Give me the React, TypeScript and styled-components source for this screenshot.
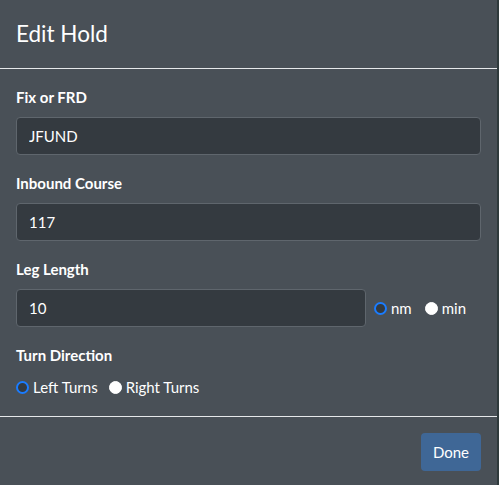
import React, { useState } from 'react';
import styled, { createGlobalStyle } from 'styled-components';

const GlobalStyle = createGlobalStyle`
  html, body {
    margin: 0;
    padding: 0;
    background: #495057;
  }
  body {
    font-family: Lato, "Noto Sans", sans-serif;
    color: #ffffff;
  }
`;

const Modal = styled.div`
  width: 497px;
  height: 485px;
  background: #495057;
  border-right: 2px solid #2f3a3c;
  display: flex;
  flex-direction: column;
`;

const Header = styled.div`
  padding: 16px;
  border-bottom: 1px solid #e6e8ea;
`;

const Title = styled.h1`
  margin: 0;
  font-size: 22.5px;
  font-weight: 400;
  line-height: 36px;
`;

const Body = styled.div`
  padding: 16px 16px 17px;
  border-bottom: 1px solid #e6e8ea;
`;

const Group = styled.div<{ $last?: boolean }>`
  margin-bottom: ${(p) => (p.$last ? '0' : '16px')};
`;

const Label = styled.div`
  font-size: 15px;
  font-weight: 700;
  line-height: 24px;
  margin-bottom: 8px;
`;

const Row = styled.div`
  display: flex;
  align-items: center;
`;

const TextInput = styled.input<{ $width?: number }>`
  box-sizing: border-box;
  width: ${(p) => (p.$width ? `${p.$width}px` : '100%')};
  height: 38px;
  padding: 0 12px;
  background: #343a40;
  border: 1px solid #5f666d;
  border-radius: 4px;
  color: #ffffff;
  font-family: inherit;
  font-size: 15px;
  outline: none;
`;

const RadioLabel = styled.label<{ $gap?: number }>`
  display: inline-flex;
  align-items: center;
  gap: 4px;
  margin-left: ${(p) => p.$gap ?? 0}px;
  font-size: 15px;
  line-height: 24px;
  cursor: pointer;
`;

const RadioDot = styled.span<{ $checked: boolean }>`
  box-sizing: border-box;
  width: 13px;
  height: 13px;
  border-radius: 50%;
  background: ${(p) => (p.$checked ? '#343a40' : '#ffffff')};
  border: ${(p) => (p.$checked ? '2.5px solid #1a7cff' : '1px solid #ffffff')};
`;

const Footer = styled.div`
  display: flex;
  justify-content: flex-end;
  padding: 16px 16px 14px;
`;

const Button = styled.button`
  height: 38px;
  padding: 0 12px;
  background: #3f6796;
  border: none;
  border-radius: 4px;
  color: #ffffff;
  font-family: inherit;
  font-size: 15px;
`;

type RadioProps = {
  checked: boolean;
  label: string;
  gap?: number;
  onClick: () => void;
};

const Radio = ({ checked, label, gap, onClick }: RadioProps) => (
  <RadioLabel $gap={gap} onClick={onClick}>
    <RadioDot $checked={checked} />
    {label}
  </RadioLabel>
);

const App = () => {
  const [fix, setFix] = useState('JFUND');
  const [course, setCourse] = useState('117');
  const [leg, setLeg] = useState('10');
  const [unit, setUnit] = useState<'nm' | 'min'>('nm');
  const [turn, setTurn] = useState<'left' | 'right'>('left');

  return (
    <>
      <GlobalStyle />
      <Modal>
        <Header>
          <Title>Edit Hold</Title>
        </Header>
        <Body>
          <Group>
            <Label>Fix or FRD</Label>
            <TextInput value={fix} onChange={(e) => setFix(e.target.value)} />
          </Group>
          <Group>
            <Label>Inbound Course</Label>
            <TextInput value={course} onChange={(e) => setCourse(e.target.value)} />
          </Group>
          <Group>
            <Label>Leg Length</Label>
            <Row>
              <TextInput $width={350} value={leg} onChange={(e) => setLeg(e.target.value)} />
              <Radio gap={8} checked={unit === 'nm'} label="nm" onClick={() => setUnit('nm')} />
              <Radio gap={13} checked={unit === 'min'} label="min" onClick={() => setUnit('min')} />
            </Row>
          </Group>
          <Group $last>
            <Label>Turn Direction</Label>
            <Row>
              <Radio checked={turn === 'left'} label="Left Turns" onClick={() => setTurn('left')} />
              <Radio gap={11} checked={turn === 'right'} label="Right Turns" onClick={() => setTurn('right')} />
            </Row>
          </Group>
        </Body>
        <Footer>
          <Button>Done</Button>
        </Footer>
      </Modal>
    </>
  );
};

export default App;
